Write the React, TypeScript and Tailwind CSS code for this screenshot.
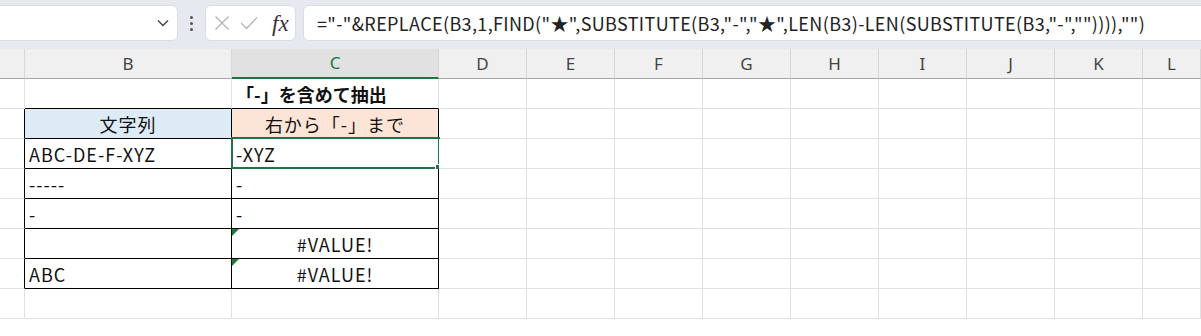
import React from 'react';

const FONT = { fontFamily: '"Noto Sans CJK JP", "Noto Sans", sans-serif' };

const FORMULA = '="-"&REPLACE(B3,1,FIND("★",SUBSTITUTE(B3,"-","★",LEN(B3)-LEN(SUBSTITUTE(B3,"-","")))),"")';

// column widths (include right gridline)
const COLS = [
  { key: '', w: 'w-[25px]' },
  { key: 'B', w: 'w-[207px]' },
  { key: 'C', w: 'w-[207px]' },
  { key: 'D', w: 'w-[88px]' },
  { key: 'E', w: 'w-[88px]' },
  { key: 'F', w: 'w-[88px]' },
  { key: 'G', w: 'w-[88px]' },
  { key: 'H', w: 'w-[88px]' },
  { key: 'I', w: 'w-[88px]' },
  { key: 'J', w: 'w-[88px]' },
  { key: 'K', w: 'w-[88px]' },
  { key: 'L', w: 'flex-1' },
];

const TopBar: React.FC = () => (
  <div className="h-[49px] bg-[#e6e9ef] flex items-start pt-[5px] gap-0">
    {/* name box */}
    <div className="ml-[-10px] w-[188px] h-[36px] bg-white rounded-[6px] border border-[#dadde3] flex items-center justify-end pr-[8px]">
      <svg width="12" height="8" viewBox="0 0 12 8" fill="none">
        <path d="M1 1.5 L6 6.5 L11 1.5" stroke="#444" strokeWidth="1.4" />
      </svg>
    </div>
    <div className="w-[27px] h-[36px] flex flex-col items-center justify-center gap-[3px]">
      <span className="w-[3px] h-[3px] bg-[#555] rounded-full" />
      <span className="w-[3px] h-[3px] bg-[#555] rounded-full" />
      <span className="w-[3px] h-[3px] bg-[#555] rounded-full" />
    </div>
    {/* cancel / enter / fx */}
    <div className="w-[91px] h-[36px] bg-white rounded-[6px] border border-[#dadde3] flex items-center pl-[8px]">
      <svg width="16" height="16" viewBox="0 0 16 16" fill="none">
        <path d="M1.5 1.5 L14.5 14.5 M14.5 1.5 L1.5 14.5" stroke="#b4b4b4" strokeWidth="1.3" />
      </svg>
      <svg className="ml-[10px]" width="18" height="14" viewBox="0 0 18 14" fill="none">
        <path d="M1 7 L6.5 12.5 L17 1.5" stroke="#b4b4b4" strokeWidth="1.3" />
      </svg>
      <span className="ml-[14px] text-[23px] leading-none italic text-[#333]" style={{ fontFamily: '"Liberation Serif", serif' }}>
        fx
      </span>
    </div>
    {/* formula */}
    <div className="ml-[7px] flex-1 mr-[-10px] h-[36px] bg-white rounded-[6px] border border-[#dadde3] flex items-center pl-[13px]">
      <span className="text-[18px] text-[#222] whitespace-nowrap tracking-[0.36px]" style={FONT}>
        {FORMULA}
      </span>
    </div>
  </div>
);

const Header: React.FC = () => (
  <div className="flex h-[30px] bg-[#f0f0f0]">
    {COLS.map((c) => {
      const sel = c.key === 'C';
      return (
        <div
          key={c.key || 'corner'}
          className={`${c.w} shrink-0 h-full flex items-center justify-center border-r border-[#d6d6d6] text-[17px] ${
            sel ? 'bg-[#e1e1e1] text-[#217346] border-b-2 border-b-[#217346]' : 'text-[#444] border-b border-b-[#a6a6a6]'
          }`}
          style={{ fontFamily: '"Noto Sans", sans-serif' }}
        >
          {c.key}
        </div>
      );
    })}
  </div>
);

type Cell = {
  text?: string;
  bg?: string;
  align?: 'left' | 'center';
  bold?: boolean;
  black?: boolean; // cell inside bordered table
  blackBottom?: boolean;
  blackRight?: boolean;
  selected?: boolean;
  err?: boolean;
};

const ROWS: Record<string, Cell>[] = [
  {
    A: {},
    B: { blackBottom: true },
    C: { text: '「-」を含めて抽出', bold: true, blackBottom: true },
  },
  {
    A: { blackRight: true },
    B: { text: '文字列', bg: 'bg-[#ddebf7]', align: 'center', black: true },
    C: { text: '右から「-」まで', bg: 'bg-[#fce4d6]', align: 'center', black: true },
  },
  {
    A: { blackRight: true },
    B: { text: 'ABC-DE-F-XYZ', black: true },
    C: { text: '-XYZ', black: true, selected: true },
  },
  {
    A: { blackRight: true },
    B: { text: '-----', black: true },
    C: { text: '-', black: true },
  },
  {
    A: { blackRight: true },
    B: { text: '-', black: true },
    C: { text: '-', black: true },
  },
  {
    A: { blackRight: true },
    B: { black: true },
    C: { text: '#VALUE!', black: true, align: 'center', err: true },
  },
  {
    A: { blackRight: true },
    B: { text: 'ABC', black: true },
    C: { text: '#VALUE!', black: true, align: 'center', err: true },
  },
  {},
];

const GridRow: React.FC<{ row: Record<string, Cell> }> = ({ row }) => (
  <div className="flex h-[30px]">
    {COLS.map((c) => {
      const cell: Cell = row[c.key || 'A'] || {};
      const right = cell.black || cell.blackRight ? 'border-r-black' : 'border-r-[#e1e1e1]';
      const bottom = cell.black || cell.blackBottom ? 'border-b-black' : 'border-b-[#e1e1e1]';
      return (
        <div
          key={c.key || 'a'}
          className={`${c.w} shrink-0 h-full relative flex items-center border-r border-b ${right} ${bottom} ${
            cell.bg || 'bg-white'
          } ${cell.align === 'center' ? 'justify-center' : 'justify-start pl-[4px]'}`}
        >
          {cell.text && (
            <span
              className={`text-[18px] text-[#111] whitespace-nowrap pt-[2px] ${cell.bold ? 'font-bold' : 'tracking-[1px]'}`}
              style={FONT}
            >
              {cell.text}
            </span>
          )}
          {cell.err && (
            <span className="absolute top-0 left-0 w-0 h-0 border-t-[7px] border-t-[#1e7b34] border-r-[7px] border-r-transparent" />
          )}
          {cell.selected && (
            <>
              <span className="absolute left-[-1px] top-[-2px] right-[-2px] bottom-[-1px] border-2 border-[#217346] pointer-events-none" />
              <span className="absolute right-[-4px] bottom-[-3px] w-[5px] h-[5px] bg-[#217346] border border-white box-content" />
            </>
          )}
        </div>
      );
    })}
  </div>
);

export default function App() {
  return (
    <div className="w-[1201px] h-[336px] overflow-hidden bg-white" style={FONT}>
      <TopBar />
      <Header />
      {ROWS.map((r, i) => (
        <GridRow key={i} row={r} />
      ))}
    </div>
  );
}
